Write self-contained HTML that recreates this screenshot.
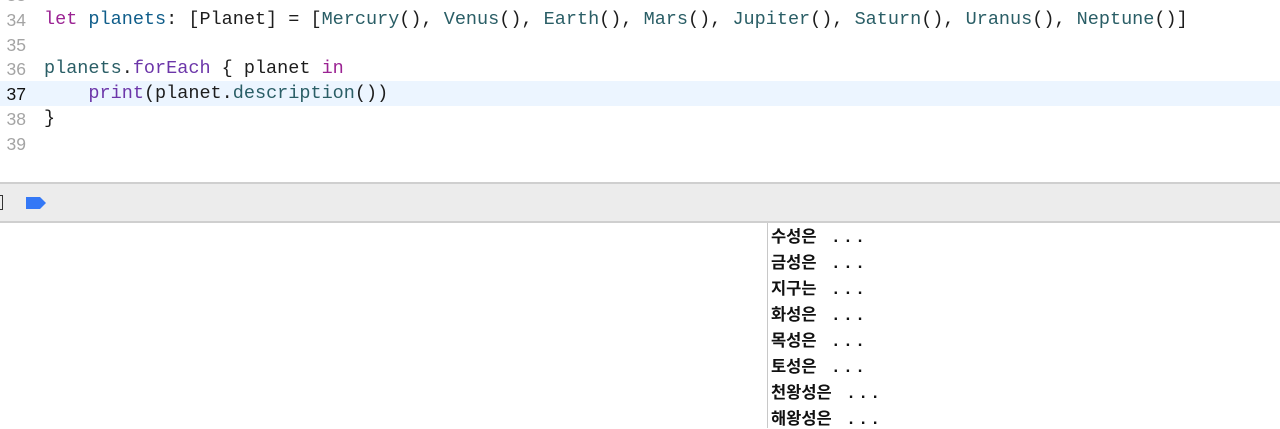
<!DOCTYPE html>
<html><head><meta charset="utf-8"><style>
*{margin:0;padding:0;box-sizing:border-box}
body{width:1280px;height:428px;overflow:hidden;background:#fff;position:relative;font-family:"Liberation Mono",monospace}
.ln{position:absolute;left:0;width:26px;text-align:right;font-family:"Liberation Sans",sans-serif;font-size:17.5px;color:#a4a4a4;line-height:20px}
.code{position:absolute;left:44px;font-size:18.5px;color:#1d1d1d;white-space:pre}
.k{color:#9b2393}.v{color:#0f5d8a}.t{color:#2a5e66}.m{color:#6c36a9}
.hl{position:absolute;left:0;top:81px;width:1280px;height:25px;background:#ecf5ff}
.bar{position:absolute;left:0;top:182px;width:1280px;height:41px;background:#ececec;border-top:2px solid #cfcfcf;border-bottom:2px solid #cfcfcf}
.out{position:absolute;left:767px;top:223px;width:1px;height:205px;background:#c8c8c8}
.o{position:absolute;left:771px;font-family:"Liberation Sans","Noto Sans CJK KR",sans-serif;font-weight:bold;font-size:16.5px;color:#111;white-space:pre}
.o b{margin-left:17px;letter-spacing:7.5px}
</style></head><body>
<div class="hl"></div>
<div class="ln" style="top:-15px">33</div>
<div class="ln" style="top:10px">34</div>
<div class="ln" style="top:35px">35</div>
<div class="ln" style="top:59px">36</div>
<div class="ln" style="top:84px;color:#111">37</div>
<div class="ln" style="top:109px">38</div>
<div class="ln" style="top:134px">39</div>
<div class="code" style="top:9px"><span class="k">let</span> <span class="v">planets</span>: [Planet] = [<span class="t">Mercury</span>(), <span class="t">Venus</span>(), <span class="t">Earth</span>(), <span class="t">Mars</span>(), <span class="t">Jupiter</span>(), <span class="t">Saturn</span>(), <span class="t">Uranus</span>(), <span class="t">Neptune</span>()]</div>
<div class="code" style="top:58px"><span class="t">planets</span>.<span class="m">forEach</span> { planet <span class="k">in</span></div>
<div class="code" style="top:83px">    <span class="m">print</span>(planet.<span class="t">description</span>())</div>
<div class="code" style="top:108px">}</div>
<div class="bar">
<div style="position:absolute;left:0;top:11px;width:3px;height:15px;border:1.5px solid #333;border-left:none"></div>
<svg style="position:absolute;left:25px;top:12px" width="22" height="14" viewBox="0 0 22 14"><path d="M1 1H15L21 7L15 13H1Z" fill="#3478f6"/></svg>
</div>
<div class="out"></div>
<div class="o" style="top:223px">수성은<b>...</b></div>
<div class="o" style="top:249px">금성은<b>...</b></div>
<div class="o" style="top:275px">지구는<b>...</b></div>
<div class="o" style="top:301px">화성은<b>...</b></div>
<div class="o" style="top:327px">목성은<b>...</b></div>
<div class="o" style="top:353px">토성은<b>...</b></div>
<div class="o" style="top:379px">천왕성은<b>...</b></div>
<div class="o" style="top:405px">해왕성은<b>...</b></div>
</body></html>
